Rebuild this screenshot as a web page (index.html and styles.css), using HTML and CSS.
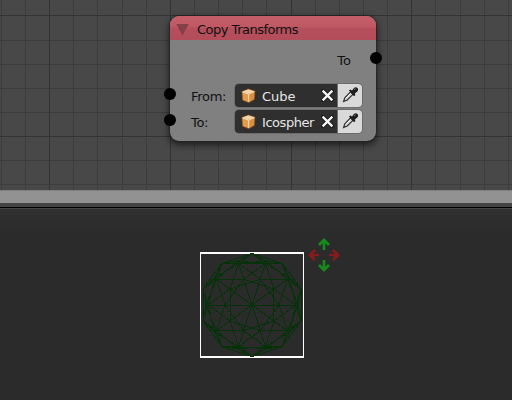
FILE: index.html
```
<!DOCTYPE html>
<html lang="en">
<head>
<meta charset="utf-8">
<title>Node editor</title>
<link rel="stylesheet" href="styles.css">
</head>
<body>
<svg class="defs" width="0" height="0" aria-hidden="true">
  <defs>
    <g id="cube">
      <path d="M7.3.4 14.4 2.8 13.8 11.8 7.8 15.2 1.2 12.4.5 3.2Z" fill="#7d4a1d"/>
      <path d="M7.3 1.2 13.6 3.2 7.7 5.8 1.3 3.6Z" fill="#f6d3a8"/>
      <path d="M1.3 3.8 7.6 6V14.3L1.9 11.9Z" fill="#e39c4b"/>
      <path d="M7.9 6 13.6 3.6 13.1 11.3 7.9 14.3Z" fill="#d98e40"/>
      <path d="M1.5 3.9 7.7 6.1 13.4 3.6M7.7 6.1V13.8" fill="none" stroke="#fff0d5" stroke-width=".9"/>
    </g>
    <g id="cross">
      <path d="M2 2 10 10M10 2 2 10" stroke="#111" stroke-width="3.6" stroke-linecap="round"/>
      <path d="M1.5 1.5 10.5 10.5M10.5 1.5 1.5 10.5" stroke="#f5f5f5" stroke-width="2.2"/>
    </g>
    <g id="dropper">
      <path d="M1.6 14.4 2.8 10.8 8.5 4.8 11 7.3 5.3 13Z" fill="#ccc" stroke="#333" stroke-width="1.2"/>
      <path d="M3.8 11.5 8.8 6.4" stroke="#fff" stroke-width="1"/>
      <path d="M7 3.6 8.5 2.6 10 3.4 12 1Q14-.4 15.6 1.2T15 4.8L12.8 6.6 13.4 8 12 9.3Z" fill="#1e1e1e"/>
      <path d="M12.3 2.5 13.5 1.8" stroke="#999" stroke-width="1"/>
    </g>
    <path id="sector" d="M0 0H46.1M27.1 0 8.4 25.8M27.1 0 35.4 25.7M27.1 0 35.4-25.7M46.1 0 35.4 25.7M46.1 0 35.4-25.7M46.1 0 49 15.9M46.1 0 49-15.9M35.4 25.7 49 15.9M35.4 25.7 30.3 41.7M49-15.9V15.9"/>
  </defs>
</svg>
<main class="app">
  <section class="editor">
    <svg class="grid" width="512" height="190" aria-hidden="true">
      <path class="minor" d="M1.5 0V190M25.5 0V190M73.5 0V190M97.5 0V190M122.5 0V190M146.5 0V190M194.5 0V190M218.5 0V190M242.5 0V190M266.5 0V190M315.5 0V190M339.5 0V190M363.5 0V190M387.5 0V190M435.5 0V190M460.5 0V190M484.5 0V190M508.5 0V190M0 40.5H512M0 64.5H512M0 88.5H512M0 112.5H512M0 160.5H512M0 184.5H512"/>
      <path class="major" d="M49.5 0V190M170.5 0V190M291.5 0V190M411.5 0V190M0 15.5H512M0 136.5H512"/>
    </svg>
    <article class="node">
      <header class="head"><i class="tri"></i><span>Copy Transforms</span></header>
      <div class="output"><span>To</span><i class="socket out"></i></div>
      <div class="input">
        <i class="socket in"></i><label>From:</label>
        <div class="field"><svg class="cube" viewBox="0 0 15 16"><use href="#cube"/></svg><span>Cube</span><svg class="cross" viewBox="0 0 12 12"><use href="#cross"/></svg></div>
        <div class="pick"><svg viewBox="0 0 16 16"><use href="#dropper"/></svg></div>
      </div>
      <div class="input">
        <i class="socket in"></i><label>To:</label>
        <div class="field"><svg class="cube" viewBox="0 0 15 16"><use href="#cube"/></svg><span class="long">Icospher</span><svg class="cross" viewBox="0 0 12 12"><use href="#cross"/></svg></div>
        <div class="pick"><svg viewBox="0 0 16 16"><use href="#dropper"/></svg></div>
      </div>
    </article>
  </section>
  <div class="bar"></div>
  <div class="edge"></div>
  <section class="viewport">
    <div class="frame">
      <svg class="sphere" width="102" height="102" viewBox="-51 -51 102 102">
        <use href="#sector"/><use href="#sector" transform="rotate(36)"/><use href="#sector" transform="rotate(72)"/><use href="#sector" transform="rotate(108)"/><use href="#sector" transform="rotate(144)"/><use href="#sector" transform="rotate(180)"/><use href="#sector" transform="rotate(216)"/><use href="#sector" transform="rotate(252)"/><use href="#sector" transform="rotate(288)"/><use href="#sector" transform="rotate(324)"/>
        <path d="M-30-42H30M-30 42H30"/>
      </svg>
    </div>
    <svg class="arrows" width="32" height="34" viewBox="0 0 32 34">
      <path class="green" d="M16 12V3M11 7 16 2 21 7M16 22V31M11 27 16 32 21 27"/>
      <path class="red" d="M11 17H2M7 12 2 17 7 22M21 17H30M25 12 30 17 25 22"/>
    </svg>
  </section>
</main>
</body>
</html>
```
FILE: styles.css
```
* { box-sizing: border-box; }
body { margin: 0; background: #2b2b2b; font: 13px/16px "DejaVu Sans", sans-serif; color: #111; }
.defs { position: absolute; }
.app { width: 512px; height: 400px; display: flex; flex-direction: column; overflow: hidden; }
.editor { position: relative; height: 190px; background: #484848; padding: 16px 0 0 170px; }
.grid { position: absolute; inset: 0; fill: none; shape-rendering: crispEdges; }
.minor { stroke: #3c3c3c; }
.major { stroke: #333; }
.node {
  position: relative; width: 206px; height: 125px; border-radius: 9px;
  background: #808080; box-shadow: 0 0 0 1px #222a, 0 3px 7px 1px #0009;
}
.head {
  height: 24px; display: flex; align-items: center; border-radius: 9px 9px 0 0;
  background: linear-gradient(#c45f6a 0, #c05964 10px, #b44f5b 13px, #b24d59 100%);
  padding: 3px 0 0 6px; gap: 8px; white-space: nowrap; letter-spacing: -0.5px;
}
.tri { width: 13px; height: 12px; background: #853f47; clip-path: polygon(0 0, 100% 0, 50% 100%); }
.output { position: relative; height: 43px; padding: 13px 25px 0 0; text-align: right; }
.socket { position: absolute; width: 12px; height: 12px; border-radius: 50%; background: #000; }
.out { right: -5.5px; top: 12px; }
.in { left: -6px; top: 5.4px; }
.input { position: relative; display: flex; height: 26px; padding-left: 21px; }
.input label { width: 44px; padding-top: 6px; letter-spacing: -0.3px; }
.field {
  width: 103px; height: 23px; margin-top: 1px; display: flex; align-items: center;
  background: #2f2f2f; border-radius: 4px 0 0 4px; color: #e6e6e6; padding: 0 4px 0 6px;
  box-shadow: 0 0 0 1px #6c6c6c;
}
.field span { flex: 1; padding: 3px 0 0 6px; white-space: nowrap; }
.field .long { letter-spacing: -0.45px; }
.cube { width: 15px; height: 16px; flex: none; }
.cross { width: 13px; height: 13px; flex: none; }
.pick {
  width: 24px; height: 23px; margin-top: 1px; padding: 3px 4px; background: #d9d9d9;
  border-radius: 0 4px 4px 0; box-shadow: 0 0 0 1px #6c6c6c;
}
.pick svg { display: block; width: 16px; height: 16px; }
.bar { height: 13px; background: #929292; border-top: 1px solid #808080; }
.edge { height: 6px; background: #444; border-bottom: 1px solid #444; box-shadow: inset 0 -1px #000; }
.viewport { flex: 1; display: flex; align-items: flex-start; padding: 43px 0 0 200px; background: linear-gradient(#303030, #2b2b2b 25px); }
.frame { width: 104px; height: 106px; border: solid #fff; border-width: 2px 1px; }
.sphere { display: block; overflow: visible; fill: none; stroke: #06320a; stroke-width: 1; shape-rendering: crispEdges; }
.arrows { margin: -14px 0 0 4px; fill: none; stroke-width: 2.7; }
.green { stroke: #168a1c; }
.red { stroke: #851b1b; }
```
